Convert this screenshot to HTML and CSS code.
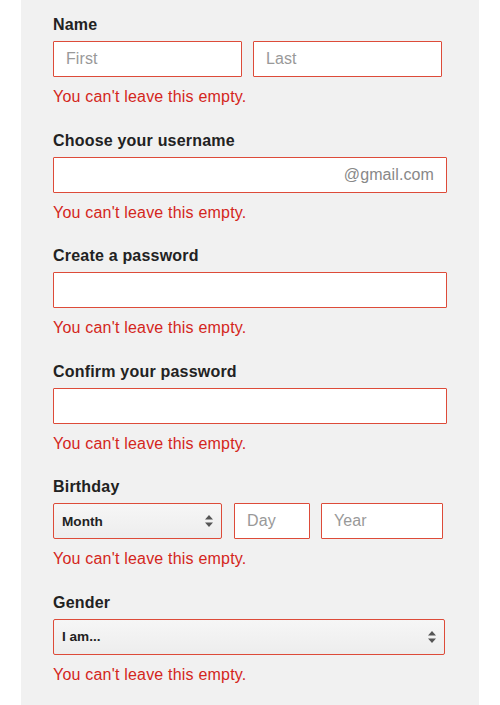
FILE: index.html
```html
<!DOCTYPE html>
<html>
<head>
<meta charset="utf-8">
<link rel="stylesheet" href="styles.css">
</head>
<body>
<div class="panel">
  <div class="group">
    <div class="label">Name</div>
    <div class="row">
      <div class="field w-first"><span class="ph">First</span></div>
      <div class="field w-last"><span class="ph">Last</span></div>
    </div>
    <div class="error">You can't leave this empty.</div>
  </div>
  <div class="group">
    <div class="label">Choose your username</div>
    <div class="field w-full suffix"><span class="ph-dark">@gmail.com</span></div>
    <div class="error">You can't leave this empty.</div>
  </div>
  <div class="group">
    <div class="label">Create a password</div>
    <div class="field w-full"></div>
    <div class="error">You can't leave this empty.</div>
  </div>
  <div class="group">
    <div class="label">Confirm your password</div>
    <div class="field w-full"></div>
    <div class="error">You can't leave this empty.</div>
  </div>
  <div class="group">
    <div class="label">Birthday</div>
    <div class="row">
      <div class="select w-month"><span>Month</span>
        <svg class="arrows" width="10" height="14" viewBox="0 0 10 14"><path d="M5 1 L9 5.5 L1 5.5 Z M5 13 L9 8.5 L1 8.5 Z" fill="#555"/></svg>
      </div>
      <div class="field w-day gap-day"><span class="ph">Day</span></div>
      <div class="field w-year gap-year"><span class="ph">Year</span></div>
    </div>
    <div class="error">You can't leave this empty.</div>
  </div>
  <div class="group">
    <div class="label">Gender</div>
    <div class="select w-gender"><span>I am...</span>
      <svg class="arrows" width="10" height="14" viewBox="0 0 10 14"><path d="M5 1 L9 5.5 L1 5.5 Z M5 13 L9 8.5 L1 8.5 Z" fill="#555"/></svg>
    </div>
    <div class="error">You can't leave this empty.</div>
  </div>
</div>
</body>
</html>
```
FILE: styles.css
```css
html, body {
  margin: 0;
  padding: 0;
  background: #ffffff;
  font-family: "Liberation Sans", Arial, sans-serif;
}
.panel {
  margin-left: 21px;
  width: 426px;
  height: 690px;
  background: #f1f1f1;
  padding: 15px 0 0 32px;
}
.group {
  margin-bottom: 24.6px;
}
.label {
  font-size: 16px;
  line-height: 19px;
  font-weight: bold;
  color: #222;
  letter-spacing: 0.2px;
  margin-bottom: 7px;
}
.row {
  display: flex;
}
.field {
  box-sizing: border-box;
  height: 36px;
  border: 1px solid #dd4b39;
  border-radius: 1px;
  background: #fff;
  display: flex;
  align-items: center;
  padding: 0 12px;
  font-size: 16px;
  letter-spacing: 0.1px;
}
.ph { color: #999; }
.ph-dark { color: #888; }
.suffix { justify-content: flex-end; }
.w-first { width: 189px; }
.w-last { width: 189px; margin-left: 11px; }
.w-full { width: 394px; }
.w-month { width: 169px; }
.w-day { width: 76px; }
.gap-day { margin-left: 12px; }
.w-year { width: 122px; }
.gap-year { margin-left: 11px; }
.w-gender { width: 392px; }
.select {
  box-sizing: border-box;
  height: 36px;
  border: 1px solid #dd4b39;
  border-radius: 2px;
  background: linear-gradient(#f6f6f6, #ededed);
  display: flex;
  align-items: center;
  justify-content: space-between;
  padding: 0 7px 0 8px;
  font-size: 13.6px;
  font-weight: bold;
  color: #222;
}
.arrows { display: block; }
.error {
  margin-top: 10px;
  font-size: 16px;
  line-height: 19px;
  letter-spacing: 0.2px;
  color: #d4261c;
}
```
